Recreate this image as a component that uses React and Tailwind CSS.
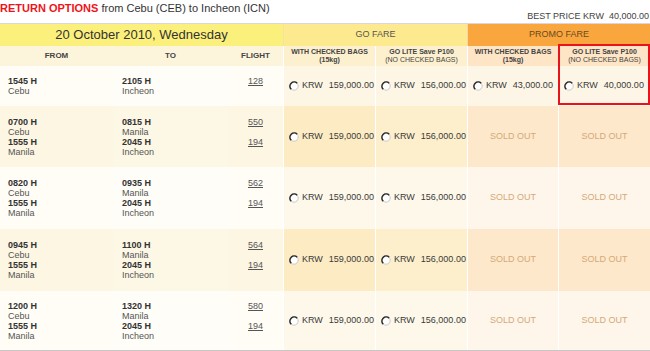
import React from "react";

const flights = [
  {
    legs: [
      { dep: "1545 H", from: "Cebu", arr: "2105 H", to: "Incheon", no: "128" },
    ],
    go: ["159,000.00", "156,000.00"],
    promo: ["43,000.00", "40,000.00"],
    h: "h-[40px]",
    dark: false,
  },
  {
    legs: [
      { dep: "0700 H", from: "Cebu", arr: "0815 H", to: "Manila", no: "550" },
      { dep: "1555 H", from: "Manila", arr: "2045 H", to: "Incheon", no: "194" },
    ],
    go: ["159,000.00", "156,000.00"],
    promo: null,
    h: "h-[61px]",
    dark: true,
  },
  {
    legs: [
      { dep: "0820 H", from: "Cebu", arr: "0935 H", to: "Manila", no: "562" },
      { dep: "1555 H", from: "Manila", arr: "2045 H", to: "Incheon", no: "194" },
    ],
    go: ["159,000.00", "156,000.00"],
    promo: null,
    h: "h-[62px]",
    dark: false,
  },
  {
    legs: [
      { dep: "0945 H", from: "Cebu", arr: "1100 H", to: "Manila", no: "564" },
      { dep: "1555 H", from: "Manila", arr: "2045 H", to: "Incheon", no: "194" },
    ],
    go: ["159,000.00", "156,000.00"],
    promo: null,
    h: "h-[62px]",
    dark: true,
  },
  {
    legs: [
      { dep: "1200 H", from: "Cebu", arr: "1320 H", to: "Manila", no: "580" },
      { dep: "1555 H", from: "Manila", arr: "2045 H", to: "Incheon", no: "194" },
    ],
    go: ["159,000.00", "156,000.00"],
    promo: null,
    h: "h-[59px]",
    dark: false,
  },
];

const cols = "grid grid-cols-[113px_115px_55px_92px_92px_91px_92px]";

function Radio() {
  return (
    <svg width="10" height="10" viewBox="0 0 10 10" className="shrink-0">
      <circle cx="5" cy="5" r="4.2" fill="#fff" stroke="#c9c9c9" strokeWidth="1" />
      <path d="M2.2 8.2 A4.2 4.2 0 0 1 8.2 2.2" fill="none" stroke="#2b2b2b" strokeWidth="1.6" />
    </svg>
  );
}

function Price({ value }) {
  return (
    <div className="flex items-center pl-[5px] text-[9px] text-[#3a3a3a]">
      <Radio />
      <span className="ml-[3px]">KRW</span>
      <span className="ml-[6px]">{value}</span>
    </div>
  );
}

function SoldOut() {
  return (
    <div className="flex items-center justify-center text-[9px] text-[#d6a878]">
      SOLD OUT
    </div>
  );
}

function Place({ time, city }) {
  return (
    <div className="leading-[10px]">
      <div className="font-bold text-[#333]">{time}</div>
      <div className="text-[#555]">{city}</div>
    </div>
  );
}

export default function App() {
  return (
    <div className="w-[650px] h-[351px] overflow-hidden bg-white font-['Liberation_Sans',Arial,sans-serif]">
      {/* Title */}
      <div className="flex justify-between h-[23px]">
        <div className="text-[11px] leading-[14px] pt-px text-[#333]">
          <span className="font-bold text-[#f0141a]">RETURN OPTIONS</span> from Cebu (CEB) to Incheon (ICN)
        </div>
        <div className="self-end text-[9px] leading-[10px] pb-[2px] text-[#444] pr-px">
          BEST PRICE KRW&nbsp; 40,000.00
        </div>
      </div>

      <div className="relative border-t border-[#d9d5e3]">
        {/* Header row 1 */}
        <div className={`${cols} h-[22px]`}>
          <div className="col-span-3 bg-[#fcf07c] flex items-center justify-center text-[13px] text-[#333]">
            20 October 2010, Wednesday
          </div>
          <div className="col-span-2 bg-[#fde98e] border-l border-[#f6e3a0] flex items-center justify-center text-[9px] text-[#555]">
            GO FARE
          </div>
          <div className="col-span-2 bg-[#f9a63f] border-l border-[#f3d7a8] flex items-center justify-center text-[9px] text-[#6b4a20]">
            PROMO FARE
          </div>
        </div>

        {/* Header row 2 */}
        <div className={`${cols} h-[20px] text-[#444] font-bold`}>
          <div className="bg-[#fdf4dc] flex items-center justify-center text-[8px]">FROM</div>
          <div className="bg-[#fdf4dc] flex items-center justify-center text-[8px]">TO</div>
          <div className="bg-[#fdf4dc] flex items-center justify-center text-[8px]">FLIGHT</div>
          <div className="bg-[#fdf0cf] border-l border-white flex flex-col items-center justify-center text-[7px] leading-[8px]">
            <span>WITH CHECKED BAGS</span>
            <span>(15kg)</span>
          </div>
          <div className="bg-[#fdf0cf] border-l border-white flex flex-col items-center justify-center text-[7px] leading-[8px]">
            <span>GO LITE Save P100</span>
            <span className="font-normal">(NO CHECKED BAGS)</span>
          </div>
          <div className="bg-[#fde5c6] border-l border-white flex flex-col items-center justify-center text-[7px] leading-[8px]">
            <span>WITH CHECKED BAGS</span>
            <span>(15kg)</span>
          </div>
          <div className="bg-[#fde5c6] border-l border-white flex flex-col items-center justify-center text-[7px] leading-[8px]">
            <span>GO LITE Save P100</span>
            <span className="font-normal">(NO CHECKED BAGS)</span>
          </div>
        </div>

        {/* Rows */}
        {flights.map((f, i) => (
          <div key={i} className={`${cols} ${f.h} text-[9px]`}>
            <div className={`${f.dark ? "bg-[#fdf6e3]" : "bg-[#fffdf6]"} flex flex-col justify-center gap-0 pl-[8px]`}>
              {f.legs.map((l, j) => (
                <Place key={j} time={l.dep} city={l.from} />
              ))}
            </div>
            <div className={`${f.dark ? "bg-[#fdf7e5]" : "bg-[#fffdf7]"} flex flex-col justify-center pl-[9px]`}>
              {f.legs.map((l, j) => (
                <Place key={j} time={l.arr} city={l.to} />
              ))}
            </div>
            <div className={`${f.dark ? "bg-[#fdf6e3]" : "bg-[#fffdf6]"} flex flex-col justify-center items-center leading-[10px]`}>
              {f.legs.map((l, j) => (
                <div key={j} className="h-[20px]">
                  <span className="underline text-[#555]">{l.no}</span>
                </div>
              ))}
            </div>
            <div className={`${f.dark ? "bg-[#fcebc3]" : i === 0 ? "bg-[#fdf6e4]" : "bg-[#fef8ea]"} border-l border-white flex items-center`}>
              <Price value={f.go[0]} />
            </div>
            <div className={`${f.dark ? "bg-[#fdefcc]" : i === 0 ? "bg-[#fdf6e4]" : "bg-[#fef8ea]"} border-l border-white flex items-center`}>
              <Price value={f.go[1]} />
            </div>
            {f.promo ? (
              <>
                <div className="bg-[#fdf6e6] border-l border-white flex items-center">
                  <Price value={f.promo[0]} />
                </div>
                <div className="bg-[#fdf6e6] border-l border-white flex items-center">
                  <Price value={f.promo[1]} />
                </div>
              </>
            ) : (
              <>
                <div className={`${f.dark ? "bg-[#fde8cb]" : "bg-[#fef6ea]"} border-l border-white flex items-center justify-center`}>
                  <SoldOut />
                </div>
                <div className={`${f.dark ? "bg-[#fde8cb]" : "bg-[#fef6ea]"} border-l border-white flex items-center justify-center`}>
                  <SoldOut />
                </div>
              </>
            )}
          </div>
        ))}
        <div className="h-[2px] bg-[#c9c6c4]" />

        {/* Best price highlight */}
        <div className="absolute left-[558px] top-[20px] w-[92px] h-[61px] border-2 border-[#e8141a] pointer-events-none" />
      </div>
    </div>
  );
}
